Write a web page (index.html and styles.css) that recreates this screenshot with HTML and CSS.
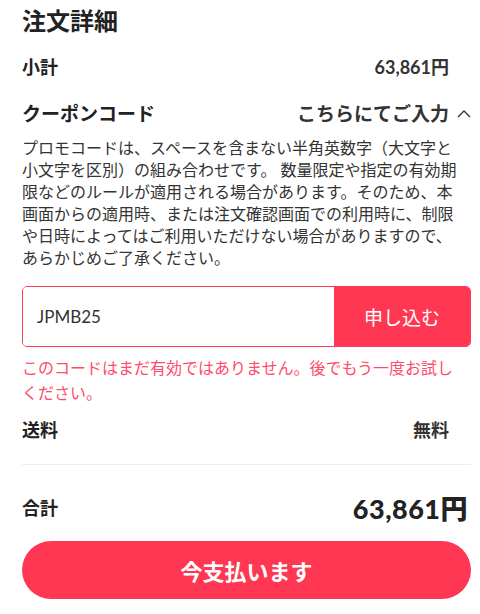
FILE: index.html
```html
<!DOCTYPE html>
<html lang="ja">
<head>
    <meta charset="UTF-8">
    <meta name="viewport" content="width=device-width, initial-scale=1.0">
    <title>注文詳細</title>
    <link rel="stylesheet" href="styles.css">
</head>
<body>
    <div class="summary">
        <h2 class="title">注文詳細</h2>

        <div class="row">
            <span class="label">小計</span>
            <span class="value">63,861円</span>
        </div>

        <div class="row coupon-head">
            <span class="label">クーポンコード</span>
            <span class="toggle">こちらにてご入力
                <svg class="chevron" width="14" height="9" viewBox="0 0 14 9">
                    <polyline points="1,8 7,2 13,8" fill="none" stroke="#333" stroke-width="1.3"/>
                </svg>
            </span>
        </div>

        <p class="note">プロモコードは、スペースを含まない半角英数字（大文字と小文字を区別）の組み合わせです。 数量限定や指定の有効期限などのルールが適用される場合があります。そのため、本画面からの適用時、または注文確認画面での利用時に、制限や日時によってはご利用いただけない場合がありますので、あらかじめご了承ください。</p>

        <div class="coupon-form">
            <input type="text" class="coupon-input" value="JPMB25">
            <button class="apply">申し込む</button>
        </div>
        <p class="error">このコードはまだ有効ではありません。後でもう一度お試しください。</p>

        <div class="row">
            <span class="label">送料</span>
            <span class="value">無料</span>
        </div>

        <hr class="divider">

        <div class="row total">
            <span class="label">合計</span>
            <span class="total-value">63,861円</span>
        </div>

        <button class="pay">今支払います</button>
    </div>
</body>
</html>
```

FILE: styles.css
```css
body {
    margin: 0;
    font-family: Lato, "Noto Sans CJK JP", sans-serif;
    color: #222;
    background: #fff;
}
.summary {
    padding: 0 9px 0 22px;
}
.title {
    margin: 5px 0 5px;
    font-size: 24px;
    line-height: 32px;
    font-weight: bold;
}
.row {
    display: flex;
    justify-content: space-between;
    align-items: center;
    height: 47px;
    padding-right: 22px;
}
.label {
    font-size: 18px;
    font-weight: bold;
}
.value {
    font-size: 18px;
    font-weight: bold;
    color: #333;
}
.coupon-head {
    padding-right: 0;
}
.coupon-head .label {
    font-size: 19px;
}
.toggle {
    display: flex;
    align-items: center;
    gap: 8px;
    font-size: 19px;
    font-weight: bold;
    color: #333;
}
.chevron {
    margin-top: 2px;
}
.note {
    margin: 1px 10px 0 0;
    font-size: 16px;
    line-height: 22px;
    color: #333;
}
.coupon-form {
    display: flex;
    margin-top: 17px;
    height: 61px;
    border: 1px solid #ff3b57;
    border-radius: 5px;
    overflow: hidden;
    box-sizing: border-box;
}
.coupon-input {
    flex: 1;
    border: none;
    outline: none;
    padding: 0 14px;
    font-family: Lato, "Noto Sans CJK JP", sans-serif;
    font-size: 17px;
    color: #333;
}
.apply {
    width: 136px;
    border: none;
    background: #ff3752;
    color: #fff;
    font-family: Lato, "Noto Sans CJK JP", sans-serif;
    font-size: 19px;
}
.error {
    margin: 8px 10px 0 0;
    font-size: 16px;
    line-height: 25px;
    color: #ff4a6a;
}
.divider {
    margin: 12px 0 0;
    border: none;
    border-top: 1px solid #eee;
}
.total {
    margin-top: 18px;
    height: 48px;
    padding-right: 3px;
}
.total-value {
    font-size: 27px;
    font-weight: 900;
    letter-spacing: 0.5px;
}
.pay {
    display: block;
    width: 100%;
    height: 58px;
    margin-top: 10px;
    border: none;
    border-radius: 29px;
    background: #ff3752;
    color: #fff;
    font-family: Lato, "Noto Sans CJK JP", sans-serif;
    font-size: 22px;
    font-weight: bold;
}
```
